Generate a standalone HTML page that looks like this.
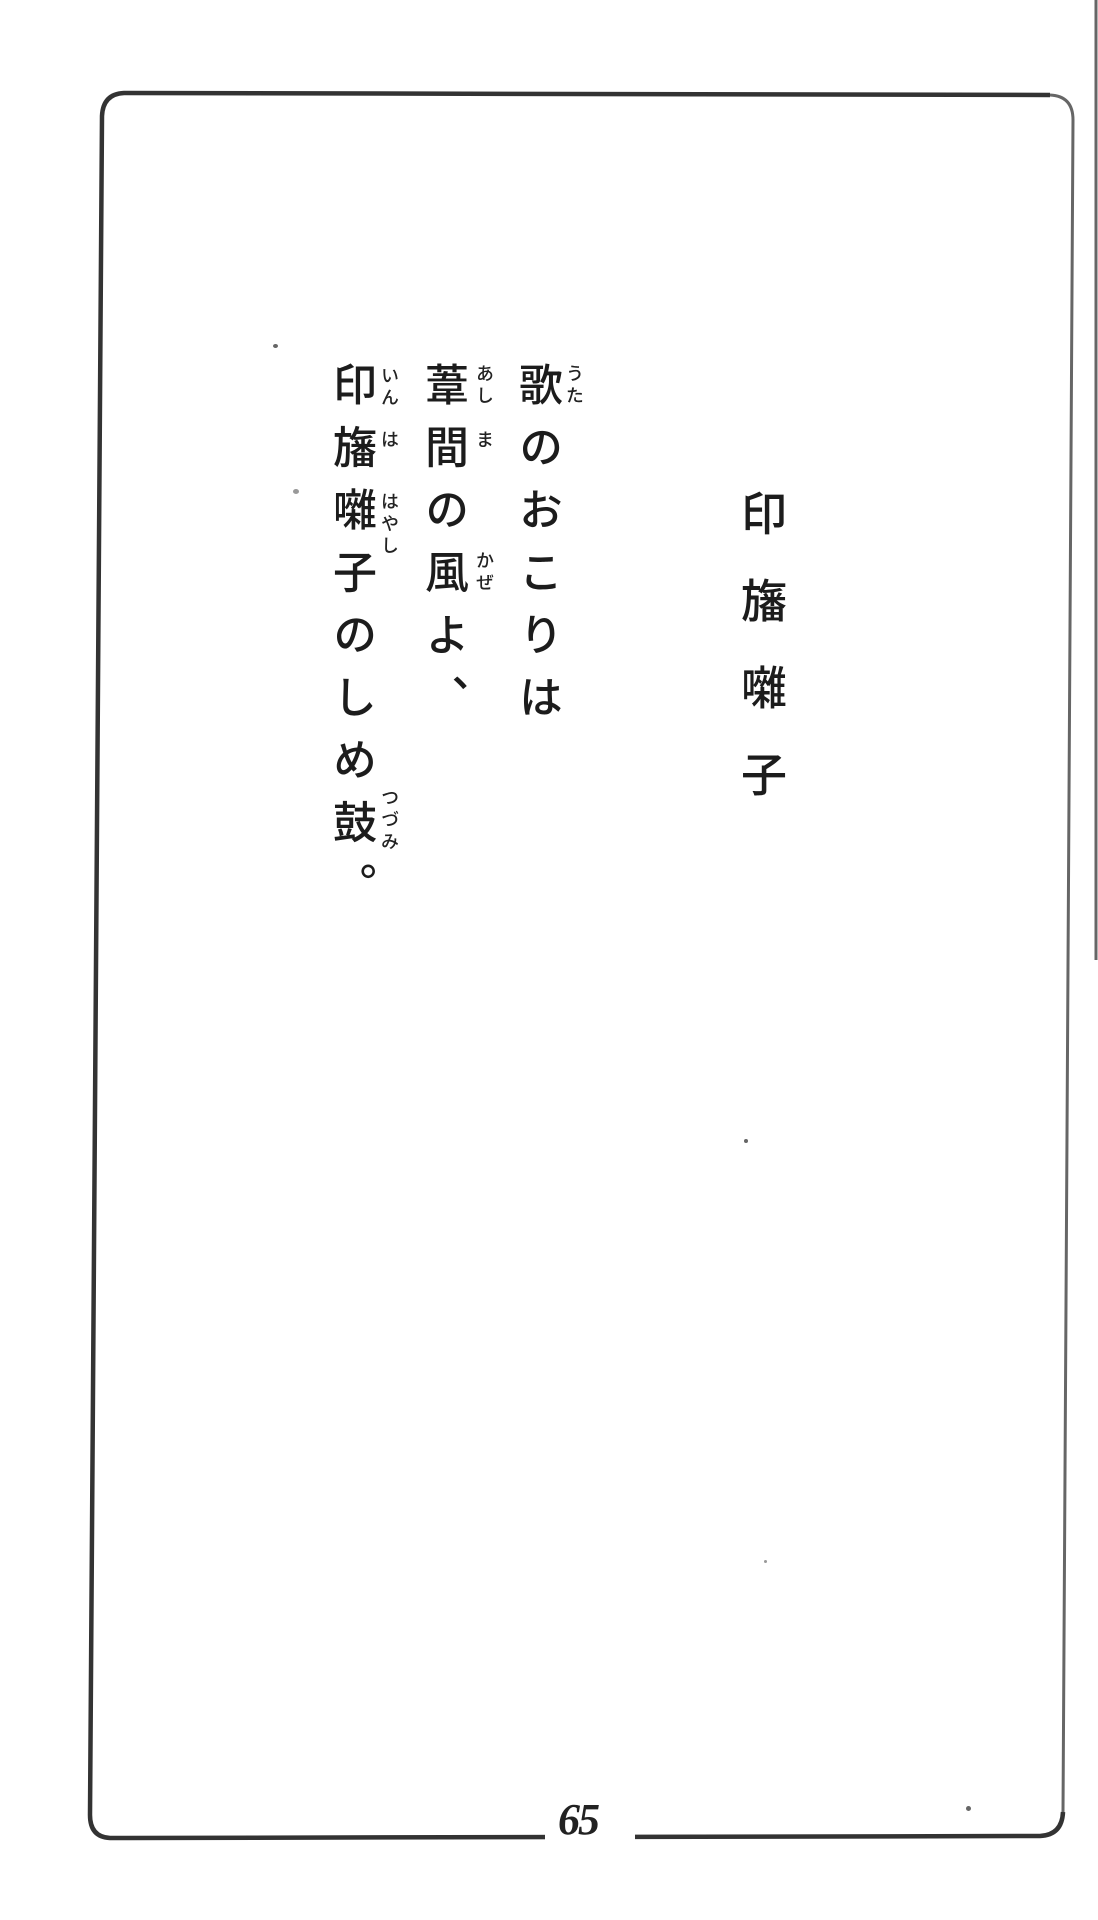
<!DOCTYPE html>
<html lang="ja"><head><meta charset="utf-8">
<style>
html,body{margin:0;padding:0;background:#fff;}
body{width:1098px;height:1920px;position:relative;overflow:hidden;font-family:"Liberation Serif","Noto Serif CJK SC","Noto Sans CJK JP",serif;}
.c{position:absolute;writing-mode:vertical-rl;font-family:"Noto Sans CJK JP",sans-serif;color:#1c1c1c;font-size:44px;line-height:44px;letter-spacing:18.5px;width:44px;white-space:nowrap;font-weight:500;}
.t{letter-spacing:41px;font-size:46px;line-height:46px;width:46px;}
.r{position:absolute;writing-mode:vertical-rl;font-family:"Noto Sans CJK JP",sans-serif;color:#222;font-size:18px;line-height:18px;letter-spacing:4px;width:18px;white-space:nowrap;font-weight:500;}
.pn{position:absolute;left:558px;top:1794px;font-family:"Liberation Serif",serif;font-style:italic;font-weight:bold;font-size:44px;color:#222;letter-spacing:-2px;}
.d{position:absolute;background:#666;border-radius:50%;}
</style></head><body>
<svg width="1098" height="1920" style="position:absolute;left:0;top:0">
<path d="M1063 1812 Q1062 1835 1040 1836 L110 1838 Q90 1837 90 1815 L102 116 Q103 94 124 93 L1050 95" fill="none" stroke="#333" stroke-width="4.5"/>
<path d="M1050 95 Q1073 96 1073 120 L1063 1812" fill="none" stroke="#666" stroke-width="3"/>
<line x1="1096" y1="0" x2="1096" y2="960" stroke="#666" stroke-width="3"/>
</svg>
<div style="position:absolute;left:545px;top:1825px;width:90px;height:20px;background:#fff"></div>
<div class="pn">65</div>

<div class="c t" style="left:741px;top:490px">印旛囃子</div>

<div class="c" style="left:519px;top:362px">歌のおこりは</div>
<div class="c" style="left:425px;top:362px">葦間の風よ、</div>
<div class="c" style="left:333px;top:362px">印旛囃子のしめ鼓。</div>

<div class="r" style="left:566px;top:364px">うた</div>
<div class="r" style="left:476px;top:364px">あし</div>
<div class="r" style="left:476px;top:430px">ま</div>
<div class="r" style="left:476px;top:551px">かぜ</div>
<div class="r" style="left:381px;top:366px">いん</div>
<div class="r" style="left:381px;top:430px">は</div>
<div class="r" style="left:381px;top:492px">はやし</div>
<div class="r" style="left:381px;top:788px">つづみ</div>

<div class="d" style="left:273px;top:344px;width:5px;height:4px"></div>
<div class="d" style="left:293px;top:489px;width:6px;height:5px;background:#999"></div>
<div class="d" style="left:744px;top:1139px;width:4px;height:4px"></div>
<div class="d" style="left:764px;top:1560px;width:3px;height:3px;background:#999"></div>
<div class="d" style="left:966px;top:1806px;width:5px;height:5px"></div>
</body></html>
